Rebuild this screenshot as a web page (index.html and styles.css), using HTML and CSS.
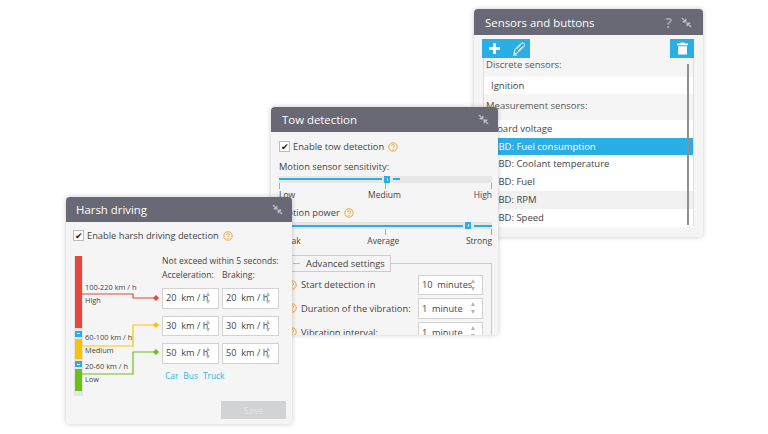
FILE: index.html
```html
<!DOCTYPE html>
<html lang="en">
<head>
  <meta charset="UTF-8" />
  <title>Vehicle settings</title>
  <link rel="stylesheet" href="styles.css">
</head>
<body>
  <svg class="defs" width="0" height="0">
    <symbol id="shrink" viewBox="0 0 12 12">
      <path d="M1 1l3.500 3.500M1.800 5.200h3.400V1.800M11 11L7.500 7.500M10.200 6.800H6.800v3.400" fill="none" stroke="#bcbdc3" stroke-width="1.500"/>
    </symbol>
    <symbol id="help" viewBox="0 0 10 10">
      <circle cx="5" cy="5" r="4.200" fill="none" stroke="#f39a1f" stroke-width="0.900"/>
      <path d="M3.500 4C3.600 2.300 6.500 2.300 6.500 3.900C6.500 5 5 5 5 6.200" fill="none" stroke="#f39a1f" stroke-width="0.900"/>
      <circle cx="5" cy="7.500" r="0.600" fill="#f39a1f"/>
    </symbol>
  </svg>

  <!-- Sensors window -->
  <section class="window window-sensors">
    <header class="window-head">
      <h2>Sensors and buttons</h2>
      <span class="head-help">?</span>
      <svg class="shrink"><use href="#shrink"/></svg>
    </header>
    <div class="toolbar">
      <div class="tool-group">
        <svg width="24" height="19" viewBox="0 0 24 19"><path d="M12.500 4v11M7 9.500h11" stroke="#fff" stroke-width="3"/></svg>
        <svg width="24" height="19" viewBox="0 0 24 19"><path d="M8 15l1-4.500 6-6c2.500-1.500 4.500 .5 3 3l-6 6zM7 16h4M10.500 10l4.500-4.500M12 12l4.500-4.500" fill="none" stroke="#fff" stroke-width="1"/></svg>
      </div>
      <div class="tool-group">
        <svg width="24" height="19" viewBox="0 0 24 19"><path d="M7 4.500h11v1.700H7zM10.500 4.500V3.500h4v1zM8 7.200h9v8.300H8z" fill="#fff"/></svg>
      </div>
    </div>
    <div class="sensor-list">
      <div class="list-title">Discrete sensors:</div>
      <div class="list-row">Ignition</div>
      <div class="list-title">Measurement sensors:</div>
      <div class="list-row">Board voltage</div>
      <div class="list-row selected">OBD: Fuel consumption</div>
      <div class="list-row">OBD: Coolant temperature</div>
      <div class="list-row">OBD: Fuel</div>
      <div class="list-row hovered">OBD: RPM</div>
      <div class="list-row">OBD: Speed</div>
      <div class="scrollbar"></div>
    </div>
  </section>

  <!-- Tow window -->
  <section class="window window-tow">
    <header class="window-head">
      <h2>Tow detection</h2>
      <svg class="shrink"><use href="#shrink"/></svg>
    </header>
    <div class="window-body">
      <label class="check-line">
        <span class="checkbox">✔</span>Enable tow detection
        <svg class="help"><use href="#help"/></svg>
      </label>
      <div class="field-title">Motion sensor sensitivity:</div>
      <div class="slider">
        <span class="slider-fill sens-a"></span><span class="knob"></span><span class="slider-fill sens-b"></span>
      </div>
      <div class="ticks"><span>Low</span><span>Medium</span><span>High</span></div>
      <div class="field-title power-title">Motion power <svg class="help"><use href="#help"/></svg></div>
      <div class="slider">
        <span class="slider-fill power-a"></span><span class="knob"></span><span class="slider-fill power-b"></span>
      </div>
      <div class="ticks"><span>Weak</span><span>Average</span><span>Strong</span></div>
      <div class="advanced">
        <div class="advanced-legend"><span class="collapse"></span>Advanced settings</div>
        <div class="adv-row">
          <svg class="help"><use href="#help"/></svg><span class="adv-label">Start detection in</span>
          <div class="spin wide"><span>10&nbsp; minutes</span><i></i></div>
        </div>
        <div class="adv-row">
          <svg class="help"><use href="#help"/></svg><span class="adv-label">Duration of the vibration:</span>
          <div class="spin wide"><span>1&nbsp; minute</span><i></i></div>
        </div>
        <div class="adv-row">
          <svg class="help"><use href="#help"/></svg><span class="adv-label">Vibration interval:</span>
          <div class="spin wide"><span>1&nbsp; minute</span><i></i></div>
        </div>
      </div>
    </div>
  </section>

  <!-- Harsh driving window -->
  <section class="window window-harsh">
    <header class="window-head">
      <h2>Harsh driving</h2>
      <svg class="shrink"><use href="#shrink"/></svg>
    </header>
    <div class="window-body">
      <label class="check-line">
        <span class="checkbox">✔</span>Enable harsh driving detection
        <svg class="help"><use href="#help"/></svg>
      </label>
      <div class="harsh-grid">
        <div class="speed-chart">
          <div class="speed-bar">
            <span class="seg seg-red"></span>
            <span class="seg-handle"></span>
            <span class="seg seg-yellow"></span>
            <span class="seg-handle"></span>
            <span class="seg seg-green"></span>
          </div>
          <svg class="wires" width="90" height="140" viewBox="0 0 90 140">
            <path d="M9 38H60V42H83" fill="none" stroke="#e8453c" stroke-width="1.200"/>
            <path d="M9 90H60V69H83" fill="none" stroke="#ffc107" stroke-width="1.200"/>
            <path d="M9 118H60V96H83" fill="none" stroke="#6fbf1a" stroke-width="1.200"/>
            <path d="M83 39l3 3-3 3-3-3z" fill="#e8453c"/>
            <path d="M83 66l3 3-3 3-3-3z" fill="#ffc107"/>
            <path d="M83 93l3 3-3 3-3-3z" fill="#6fbf1a"/>
          </svg>
          <div class="speed-label at-high">100-220 km / h<br>High</div>
          <div class="speed-label at-medium">60-100 km / h<br>Medium</div>
          <div class="speed-label at-low">20-60 km / h<br>Low</div>
        </div>
        <div class="limits">
          <div class="limits-title">Not exceed within 5 seconds:</div>
          <div class="limits-grid">
            <div>Acceleration:</div><div>Braking:</div>
            <div class="spin"><span>20&nbsp; km / h</span><i></i></div><div class="spin"><span>20&nbsp; km / h</span><i></i></div>
            <div class="spin"><span>30&nbsp; km / h</span><i></i></div><div class="spin"><span>30&nbsp; km / h</span><i></i></div>
            <div class="spin"><span>50&nbsp; km / h</span><i></i></div><div class="spin"><span>50&nbsp; km / h</span><i></i></div>
          </div>
          <div class="presets"><a>Car</a><a>Bus</a><a>Truck</a></div>
        </div>
      </div>
      <div class="save-line"><button disabled>Save</button></div>
    </div>
  </section>
</body>
</html>
```

FILE: styles.css
```css
* {
  margin: 0;
  padding: 0;
  box-sizing: border-box;
}
body {
  width: 768px;
  height: 434px;
  background: #fff;
  font-family: "Open Sans", sans-serif;
  color: #444;
  overflow: hidden;
  position: relative;
}
.defs {
  position: absolute;
}
/* Windows float on a free canvas */
.window {
  position: absolute;
  background: #f5f5f5;
  border-radius: 4px;
  box-shadow: 0 0 5px rgba(0,0,0,0.22);
  overflow: hidden;
}
.window-sensors { left: 474px; top: 9px; width: 229px; height: 228px; }
.window-tow { left: 271px; top: 107px; width: 227px; height: 228px; }
.window-harsh { left: 66px; top: 197px; width: 226px; height: 227px; }

.window-head {
  height: 25px;
  background: #686975;
  color: #fff;
  display: flex;
  align-items: center;
  padding: 0 9px 0 11px;
}
.window-harsh .window-head { padding-left: 10px; }
.window-sensors .window-head { height: 26px; padding-right: 11px; }
.window-head h2 {
  flex: 1;
  font-size: 11.400px;
  font-weight: 400;
}
.shrink {
  width: 11px;
  height: 11px;
}
.head-help {
  color: #a9aab2;
  font-size: 15px;
  font-weight: 600;
  margin-right: 9px;
}
.window-body {
  padding: 9px 7px 0 8px;
  font-size: 9.300px;
}
.window-harsh .window-body {
  padding: 8px 6px 0 7px;
}

.check-line {
  display: flex;
  align-items: center;
  height: 11px;
}
.checkbox {
  width: 11px;
  height: 11px;
  margin-right: 3px;
  border: 1px solid #bbb;
  background: #fff;
  color: #222;
  font-size: 9px;
  line-height: 9px;
  text-align: center;
}
.help {
  width: 10px;
  height: 10px;
  margin-left: 4px;
  flex: none;
}

/* Tow sliders */
.field-title {
  margin-top: 8.500px;
  height: 11px;
  line-height: 11px;
  display: flex;
  align-items: center;
}
.power-title {
  margin-top: 7.500px;
}
.slider {
  margin-top: 4px;
  height: 7px;
  width: 213px;
  background: #e6e6e6;
  display: flex;
  align-items: center;
}
.slider-fill {
  height: 2px;
  background: #29aee6;
}
.sens-a { width: 103px; }
.sens-b { width: 7px; margin-left: 3px; }
.power-a { width: 184px; }
.power-b { width: 18px; margin-left: 3px; }
.knob {
  width: 6px;
  height: 7px;
  margin-left: 2px;
  background: linear-gradient(#bfe7f8, #bfe7f8) center / 1px 3px no-repeat, #29aee6;
  flex: none;
}
.ticks {
  width: 213px;
  height: 17px;
  display: flex;
  justify-content: space-between;
  align-items: flex-end;
  font-size: 8.500px;
  line-height: 10px;
  background:
    linear-gradient(#aaa, #aaa) left top / 1px 6px no-repeat,
    linear-gradient(#aaa, #aaa) center top / 1px 6px no-repeat,
    linear-gradient(#aaa, #aaa) right top / 1px 6px no-repeat;
}

/* Advanced settings */
.advanced {
  margin-top: 16.500px;
  width: 213px;
  height: 120px;
  border: 1px solid #ccc;
  padding: 11px 8px 0 7px;
  position: relative;
}
.advanced-legend {
  position: absolute;
  left: 6px;
  top: -9px;
  height: 17px;
  padding: 0 5px 0 6px;
  border: 1px solid #ccc;
  background: #f5f5f5;
  display: flex;
  align-items: center;
  gap: 6px;
}
.collapse {
  width: 7px;
  height: 1px;
  background: #bbb;
}
.adv-row {
  display: flex;
  align-items: center;
  height: 20.500px;
  margin-bottom: 3.200px;
}
.adv-row .help {
  margin: 0 4px 0 0;
}
.adv-label {
  flex: 1;
}

/* Spinner inputs */
.spin {
  height: 20.500px;
  background: #fff;
  border: 1px solid #d2d2d2;
  display: flex;
  align-items: center;
  padding-left: 3px;
  position: relative;
  font-size: 9.200px;
  white-space: nowrap;
  overflow: hidden;
}
.spin.wide {
  width: 65px;
  flex: none;
}
.spin i {
  position: absolute;
  right: 6px;
  top: 3px;
  width: 5px;
  height: 12px;
}
.limits .spin i {
  right: 7px;
}
.spin i::before,
.spin i::after {
  content: "";
  position: absolute;
  left: 0;
  border-left: 2.500px solid transparent;
  border-right: 2.500px solid transparent;
}
.spin i::before {
  top: 0;
  border-bottom: 4px solid #b5b5b5;
}
.spin i::after {
  bottom: 0;
  border-top: 4px solid #b5b5b5;
}

/* Harsh driving */
.harsh-grid {
  display: flex;
  margin-top: 13px;
}
.speed-chart {
  width: 89px;
  height: 140px;
  position: relative;
  margin-top: 2px;
  flex: none;
}
.speed-bar {
  position: absolute;
  left: 1px;
  top: 0;
  width: 9px;
  height: 140px;
  background: #e4e4e4;
  padding: 0 1px;
  display: flex;
  flex-direction: column;
}
.seg { display: block; width: 100%; flex: none; }
.seg-red { height: 72px; background: #e8453c; }
.seg-yellow { height: 20px; background: #ffc107; }
.seg-green { height: 22px; background: #6cc011; }
.seg-handle {
  height: 6px;
  margin: 2.500px 0 2px;
  flex: none;
  background: linear-gradient(#fff, #fff) center / 3px 1px no-repeat, #29aee6;
}
.wires {
  position: absolute;
  left: 0;
  top: 0;
}
.speed-label {
  position: absolute;
  left: 12px;
  font-size: 7.400px;
  line-height: 13px;
  white-space: nowrap;
}
.at-high { top: 25px; }
.at-medium { top: 75px; }
.at-low { top: 104px; }

.limits {
  flex: 1;
  font-size: 8.600px;
}
.limits-title {
  height: 14px;
  line-height: 14px;
  white-space: nowrap;
}
.limits-grid {
  display: grid;
  grid-template-columns: 57px 57px;
  grid-template-rows: 13px 20.500px 20.500px 20.500px;
  column-gap: 3px;
  row-gap: 7px;
  line-height: 14px;
}
.presets {
  display: flex;
  gap: 5px;
  margin: 6px 0 0 3px;
  font-size: 8.400px;
  line-height: 12px;
  color: #33b5e5;
}
.save-line {
  display: flex;
  justify-content: flex-end;
  margin-top: 5px;
}
.save-line button {
  width: 65px;
  height: 18px;
  border: none;
  background: #d2d3d5;
  color: #e4e5e6;
  font-family: inherit;
  font-size: 9.300px;
}

/* Sensors list */
.toolbar {
  display: flex;
  justify-content: space-between;
  padding: 4px 9px 0 8px;
}
.tool-group {
  height: 19px;
  background: #29aee6;
  display: flex;
}
.sensor-list {
  margin: 0 9px;
  height: 168px;
  border-left: 1px solid #ddd;
  border-right: 1px solid #ddd;
  border-bottom: 1px solid #ddd;
  position: relative;
  font-size: 9.500px;
}
.list-title {
  height: 18.500px;
  line-height: 13px;
  padding-left: 2px;
  color: #555;
}
.list-row {
  height: 17.800px;
  line-height: 17.800px;
  padding-left: 7px;
  background: #fff;
}
.list-row + .list-title {
  height: 25.500px;
  line-height: 24px;
}
.list-row.selected { background: #29aee6; color: #fff; }
.list-row.hovered { background: #f1f1f1; }
.scrollbar {
  position: absolute;
  right: 4px;
  top: 6px;
  bottom: 0;
  width: 2.500px;
  background: #8f8f8f;
}
```
